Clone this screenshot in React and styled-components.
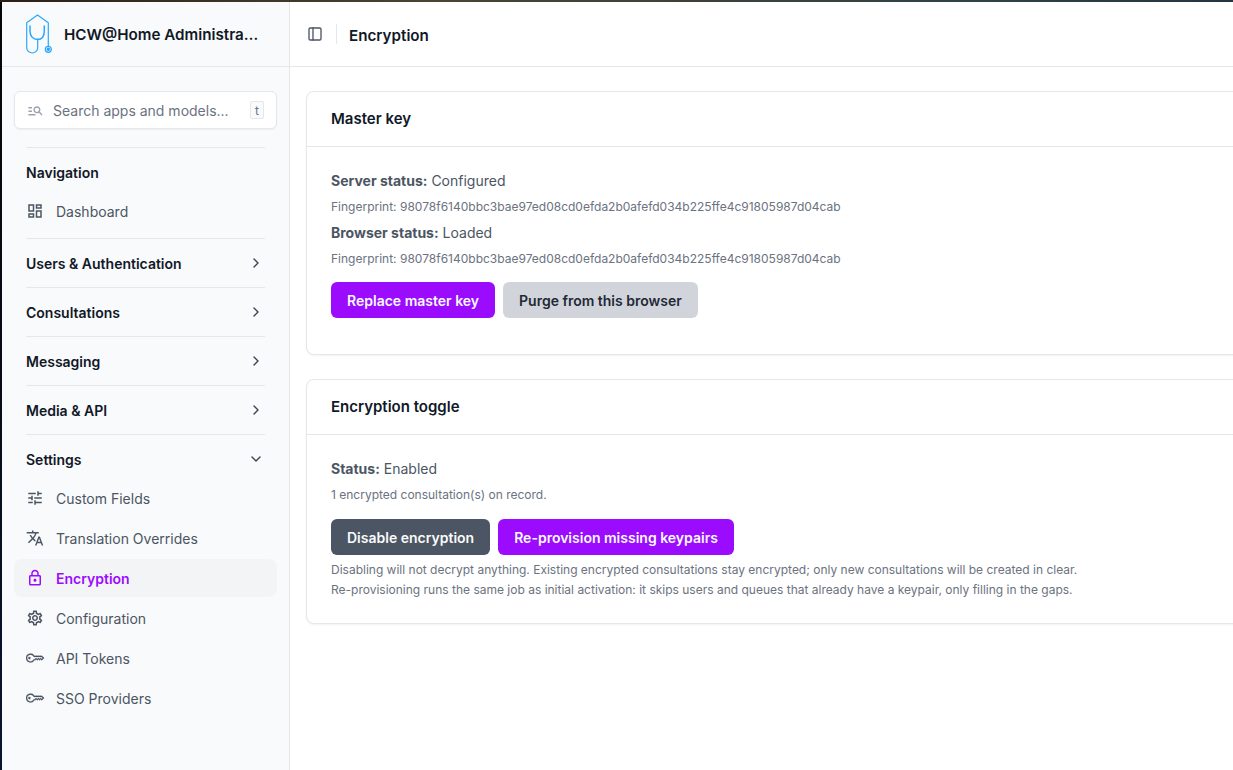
import React from "react";
import styled, { createGlobalStyle } from "styled-components";
import { ChevronRight, ChevronDown, PanelLeft } from "lucide-react";
import {
  MdOutlineDashboard,
  MdOutlineManageSearch,
  MdOutlineTune,
  MdOutlineTranslate,
  MdOutlineLock,
  MdOutlineSettings,
} from "react-icons/md";
import { BsKey } from "react-icons/bs";

const GlobalStyle = createGlobalStyle`
  * { box-sizing: border-box; }
  html, body { margin: 0; height: 100%; }
  body {
    font-family: Inter, "Liberation Sans", sans-serif;
    background: #fff;
    overflow: hidden;
  }
`;

// the window edge shows a sliver of the desktop behind it
const Screen = styled.div`
  height: 770px;
  width: 1233px;
  display: flex;
  flex-direction: column;
  background:
    linear-gradient(to right, #2a2018, #4a4434 35%, #3d4238 55%, #2f4248 80%, #26343f) top / 100% 2px no-repeat,
    linear-gradient(to bottom, #050608, #070c16 50%, #0a1630);
  padding: 2px 0 0 2px;
  overflow: hidden;
`;

const Shell = styled.div`
  flex: 1;
  display: flex;
  min-height: 0;
  background: #fff;
`;

const Sidebar = styled.aside`
  width: 288px;
  flex: none;
  background: #f9fafb;
  border-right: 1px solid #e5e7eb;
  display: flex;
  flex-direction: column;
`;

const Brand = styled.div`
  height: 65px;
  flex: none;
  display: flex;
  align-items: center;
  gap: 10px;
  padding: 0 12px 0 22px;
  border-bottom: 1px solid #e5e7eb;
`;

const BrandName = styled.div`
  font-size: 15.2px;
  font-weight: 600;
  color: #111827;
  white-space: nowrap;
`;

const SidebarBody = styled.div`
  padding: 24px 12px;
  display: flex;
  flex-direction: column;
`;

const SearchBox = styled.div`
  height: 38px;
  background: #fff;
  border: 1px solid #e5e7eb;
  border-radius: 6px;
  box-shadow: 0 1px 2px rgba(0, 0, 0, 0.05);
  display: flex;
  align-items: center;
  padding: 0 12px;
  color: #6b7280;
  font-size: 14px;
  gap: 9px;
  margin-bottom: 18px;

  svg { color: #9ca3af; flex: none; }
`;

const SearchText = styled.span`
  flex: 1;
  white-space: nowrap;
`;

const Kbd = styled.span`
  width: 14px;
  height: 18px;
  display: flex;
  align-items: center;
  justify-content: center;
  font-size: 12px;
  color: #6b7280;
  background: #f9fafb;
  border: 1px solid #e5e7eb;
  border-radius: 2px;
`;

const Group = styled.div`
  border-top: 1px solid #e5e7eb;
  margin: 0 12px;
`;

const GroupHead = styled.div`
  height: 48px;
  display: flex;
  align-items: center;
  justify-content: space-between;
  font-size: 14px;
  font-weight: 600;
  color: #111827;
  padding-right: 1px;
  svg { color: #374151; }
`;

const Items = styled.div`
  margin: -4px -12px 8px;
  display: flex;
  flex-direction: column;
  gap: 2px;
`;

const Item = styled.div`
  height: 38px;
  display: flex;
  align-items: center;
  gap: 12px;
  padding: 0 12px;
  border-radius: 8px;
  font-size: 14px;
  font-weight: ${(p) => (p.$active ? 600 : 400)};
  color: ${(p) => (p.$active ? "#9b0cff" : "#4b5563")};
  background: ${(p) => (p.$active ? "#f3f4f6" : "transparent")};
  svg { flex: none; }
`;

const Main = styled.main`
  flex: 1;
  min-width: 0;
  display: flex;
  flex-direction: column;
`;

const TopBar = styled.header`
  height: 65px;
  flex: none;
  display: flex;
  align-items: center;
  padding: 0 17px;
  border-bottom: 1px solid #e5e7eb;
  svg { color: #4b5563; }
`;

const TopDivider = styled.div`
  width: 1px;
  height: 20px;
  background: #e5e7eb;
  margin: 0 12px 0 13px;
`;

const PageTitle = styled.h1`
  margin: 0;
  padding-top: 2px;
  font-size: 15.2px;
  font-weight: 600;
  color: #111827;
`;

const Content = styled.div`
  padding: 24px 0 0 16px;
  display: flex;
  flex-direction: column;
  gap: 24px;
  width: 1000px;
`;

const Card = styled.section`
  background: #fff;
  border: 1px solid #e5e7eb;
  border-radius: 8px;
  box-shadow: 0 1px 2px rgba(0, 0, 0, 0.05);
`;

const CardHead = styled.div`
  height: 55px;
  display: flex;
  align-items: center;
  padding: 0 24px 1px;
  border-bottom: 1px solid #e5e7eb;
  font-size: 15px;
  font-weight: 600;
  color: #111827;
`;

const CardBody = styled.div`
  padding: ${(p) => p.$pad || "24px 24px 36px"};
`;

const Status = styled.p`
  margin: 0;
  font-size: 14px;
  line-height: 20px;
  color: #4b5563;
  b { font-weight: 700; }
`;

const Small = styled.p`
  margin: 8px 0;
  font-size: 12px;
  line-height: 16px;
  color: #6b7280;
`;

const Note = styled.p`
  margin: 5px 0 0;
  font-size: 12px;
  line-height: 20px;
  color: #6b7280;
`;

const Buttons = styled.div`
  display: flex;
  gap: 8px;
  margin-top: ${(p) => p.$top || "16px"};
`;

const Button = styled.button`
  height: 36px;
  padding: 0 16px;
  border: 0;
  border-radius: 6px;
  font-family: inherit;
  font-size: 14px;
  font-weight: 600;
  color: ${(p) => (p.$tone === "muted" ? "#1f2937" : "#f9fafb")};
  background: ${(p) =>
    p.$tone === "muted" ? "#d1d5db" : p.$tone === "dark" ? "#4b5563" : "#9b0cff"};
`;

const Logo = () => (
  <svg width="30" height="42" viewBox="0 0 30 42" fill="none" stroke="#29a8ff" strokeWidth="1.2" strokeLinecap="round" strokeLinejoin="round">
    <path d="M24.3 33V9.7L13.5 2 2.7 9.7V34.5a5.5 5.5 0 0 0 11 0V26" />
    <path d="M6 13V18C6 23 9 26.5 13.5 26.5S20.3 23 20.3 18V13" strokeWidth="1.5" />
    <circle cx="24.3" cy="36.3" r="3" />
    <circle cx="24.3" cy="36.3" r="1.2" fill="#29a8ff" />
  </svg>
);

const KeyIcon = ({ size }) => <BsKey size={size} strokeWidth="0.25" stroke="currentColor" />;

const groups = [
  { name: "Users & Authentication" },
  { name: "Consultations" },
  { name: "Messaging" },
  { name: "Media & API" },
];

const settings = [
  { label: "Custom Fields", Icon: MdOutlineTune, size: 18 },
  { label: "Translation Overrides", Icon: MdOutlineTranslate, size: 18 },
  { label: "Encryption", Icon: MdOutlineLock, size: 18, active: true },
  { label: "Configuration", Icon: MdOutlineSettings, size: 18 },
  { label: "API Tokens", Icon: KeyIcon, size: 18 },
  { label: "SSO Providers", Icon: KeyIcon, size: 18 },
];

const fingerprint = "Fingerprint: 98078f6140bbc3bae97ed08cd0efda2b0afefd034b225ffe4c91805987d04cab";

const App = () => (
  <Screen>
    <GlobalStyle />
    <Shell>
      <Sidebar>
        <Brand>
          <Logo />
          <BrandName>HCW@Home Administra…</BrandName>
        </Brand>
        <SidebarBody>
          <SearchBox>
            <MdOutlineManageSearch size={17} />
            <SearchText>Search apps and models...</SearchText>
            <Kbd>t</Kbd>
          </SearchBox>
          <Group>
            <GroupHead>Navigation</GroupHead>
            <Items>
              <Item>
                <MdOutlineDashboard size={18} />
                Dashboard
              </Item>
            </Items>
          </Group>
          {groups.map((g) => (
            <Group key={g.name}>
              <GroupHead>
                {g.name}
                <ChevronRight size={16} />
              </GroupHead>
            </Group>
          ))}
          <Group>
            <GroupHead>
              Settings
              <ChevronDown size={16} />
            </GroupHead>
            <Items>
              {settings.map(({ label, Icon, size, active }) => (
                <Item key={label} $active={active}>
                  <Icon size={size} />
                  {label}
                </Item>
              ))}
            </Items>
          </Group>
        </SidebarBody>
      </Sidebar>
      <Main>
        <TopBar>
          <PanelLeft size={16} />
          <TopDivider />
          <PageTitle>Encryption</PageTitle>
        </TopBar>
        <Content>
          <Card>
            <CardHead>Master key</CardHead>
            <CardBody>
              <Status>
                <b>Server status:</b> Configured
              </Status>
              <Small>{fingerprint}</Small>
              <Status>
                <b>Browser status:</b> Loaded
              </Status>
              <Small>{fingerprint}</Small>
              <Buttons $top="15px">
                <Button>Replace master key</Button>
                <Button $tone="muted">Purge from this browser</Button>
              </Buttons>
            </CardBody>
          </Card>
          <Card>
            <CardHead>Encryption toggle</CardHead>
            <CardBody $pad="24px 24px 23px">
              <Status>
                <b>Status:</b> Enabled
              </Status>
              <Small>1 encrypted consultation(s) on record.</Small>
              <Buttons>
                <Button $tone="dark">Disable encryption</Button>
                <Button>Re-provision missing keypairs</Button>
              </Buttons>
              <Note>
                Disabling will not decrypt anything. Existing encrypted consultations stay encrypted; only new consultations will be created in clear.
                <br />
                Re-provisioning runs the same job as initial activation: it skips users and queues that already have a keypair, only filling in the gaps.
              </Note>
            </CardBody>
          </Card>
        </Content>
      </Main>
    </Shell>
  </Screen>
);

export default App;
